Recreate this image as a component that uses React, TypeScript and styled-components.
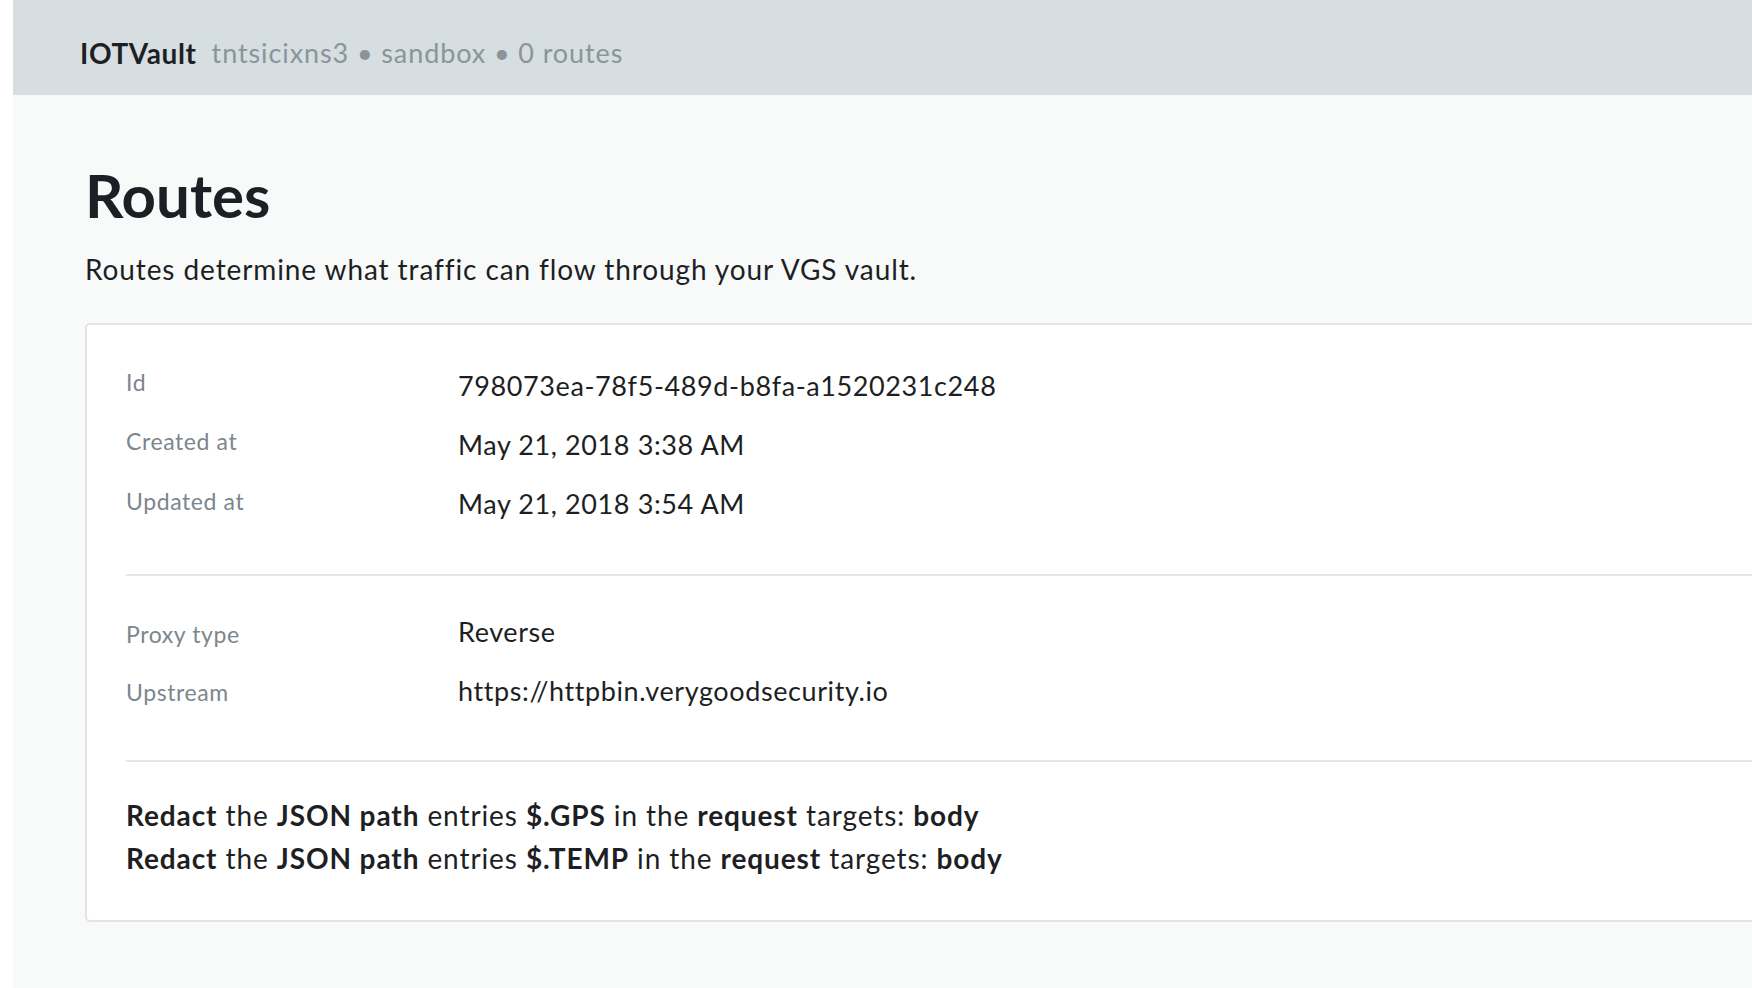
import React from "react";
import styled, { createGlobalStyle } from "styled-components";

const Global = createGlobalStyle`
  html, body { margin: 0; padding: 0; background: #ffffff; }
  body { font-family: "Lato", "Noto Sans", sans-serif; color: #1d1f24; overflow: hidden; }
`;

const Shell = styled.div`
  padding-left: 13px;
  min-height: 988px;
  background: #ffffff;
  overflow: hidden;
`;

const Main = styled.div`
  background: #f8f9f9;
  min-height: 988px;
`;

const TopBar = styled.header`
  height: 95px;
  box-sizing: border-box;
  padding: 10px 0 0 67px;
  background: #d6dee1;
  display: flex;
  align-items: center;
  gap: 15px;
`;

const Brand = styled.span`
  font-size: 28px;
  font-weight: 700;
  letter-spacing: 0.6px;
  color: #1d1f24;
`;

const Meta = styled.span`
  font-size: 27px;
  letter-spacing: 0.9px;
  color: #8b9499;
`;

const Content = styled.main`
  padding: 64px 0 0 72px;
`;

const Title = styled.h1`
  margin: 0;
  font-size: 60px;
  font-weight: 700;
  line-height: 72px;
  color: #1d1f24;
`;

const Lead = styled.p`
  margin: 20px 0 0;
  font-size: 28px;
  letter-spacing: 0.9px;
  line-height: 36px;
  color: #1d1f24;
`;

const Card = styled.section`
  margin-top: 36px;
  margin-right: -60px;
  background: #ffffff;
  border: 2px solid #e2e4e5;
  border-radius: 5px;
  padding-left: 39px;
`;

const Block = styled.div<{ $first?: boolean; $top: number; $bottom: number }>`
  padding: ${(p) => p.$top}px 0 ${(p) => p.$bottom}px;
  border-top: ${(p) => (p.$first ? "none" : "2px solid #e4e6e7")};
`;

const Row = styled.div`
  display: grid;
  grid-template-columns: 332px 1fr;
  align-items: center;
  height: 59px;
`;

const Label = styled.span<{ $shift: number }>`
  font-size: 23px;
  letter-spacing: 0.6px;
  color: #7c868c;
  position: relative;
  top: ${(p) => p.$shift}px;
`;

const Value = styled.span`
  font-size: 27px;
  letter-spacing: 0.6px;
  color: #1d1f24;
`;

const RuleLine = styled.div`
  font-size: 28px;
  letter-spacing: 0.9px;
  line-height: 43px;
  color: #1d1f24;
  b { font-weight: 700; }
`;

const meta = [
  { label: "Id", value: "798073ea-78f5-489d-b8fa-a1520231c248", shift: -4 },
  { label: "Created at", value: "May 21, 2018 3:38 AM", shift: -4 },
  { label: "Updated at", value: "May 21, 2018 3:54 AM", shift: -3 },
];

const proxy = [
  { label: "Proxy type", value: "Reverse", shift: 2 },
  { label: "Upstream", value: "https://httpbin.verygoodsecurity.io", shift: 1 },
];

const rules = ["$.GPS", "$.TEMP"];

export default function App() {
  return (
    <>
      <Global />
      <Shell>
        <Main>
          <TopBar>
            <Brand>IOTVault</Brand>
            <Meta>tntsicixns3 • sandbox • 0 routes</Meta>
          </TopBar>
          <Content>
            <Title>Routes</Title>
            <Lead>Routes determine what traffic can flow through your VGS vault.</Lead>
            <Card>
              <Block $first $top={31} $bottom={41}>
                {meta.map((m) => (
                  <Row key={m.label}>
                    <Label $shift={m.shift}>{m.label}</Label>
                    <Value>{m.value}</Value>
                  </Row>
                ))}
              </Block>
              <Block $top={26} $bottom={40}>
                {proxy.map((m) => (
                  <Row key={m.label}>
                    <Label $shift={m.shift}>{m.label}</Label>
                    <Value>{m.value}</Value>
                  </Row>
                ))}
              </Block>
              <Block $top={32} $bottom={40}>
                {rules.map((r) => (
                  <RuleLine key={r}>
                    <b>Redact</b> the <b>JSON path</b> entries <b>{r}</b> in the <b>request</b> targets: <b>body</b>
                  </RuleLine>
                ))}
              </Block>
            </Card>
          </Content>
        </Main>
      </Shell>
    </>
  );
}
